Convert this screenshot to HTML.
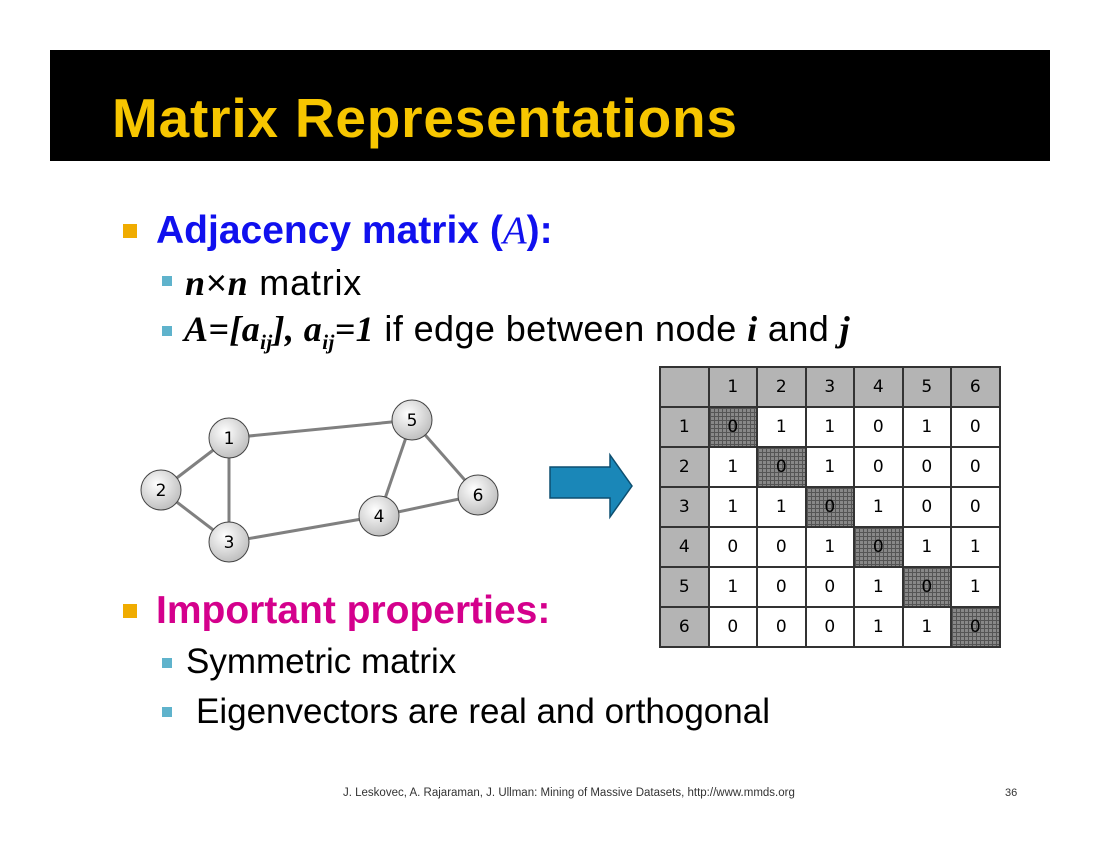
<!DOCTYPE html>
<html><head><style>
body{margin:0;width:1100px;height:850px;background:#fff;position:relative;font-family:"Liberation Sans",sans-serif;overflow:hidden}
.band{position:absolute;left:50px;top:50px;width:1000px;height:111px;background:#000}
.title{position:absolute;left:112px;top:86px;font-size:55px;font-weight:bold;color:#f7c600;letter-spacing:0.8px}
.t{position:absolute;white-space:nowrap}
.sq{position:absolute;background:#f0ac00;width:14px;height:14px}
.sq2{position:absolute;background:#5fb3cc;width:10px;height:10px}
.ser{font-family:"Liberation Serif",serif;font-style:italic;font-weight:bold}
table{position:absolute;left:659px;top:366px;border-collapse:collapse}
td{width:46.5px;height:38px;border:2px solid #333;text-align:center;font-size:17px;font-family:"DejaVu Sans",sans-serif;padding:0}
td.h{background:#b4b4b4}
td.d{background-color:#888;background-image:linear-gradient(#555 1px,transparent 1px),linear-gradient(90deg,#555 1px,transparent 1px);background-size:4px 4px}
</style></head><body>
<div class="band"></div>
<div class="title">Matrix Representations</div>
<div class="sq" style="left:123px;top:224px"></div>
<div class="t" style="left:156px;top:208px;font-size:39px;font-weight:bold;color:#1010ee">Adjacency matrix (<span class="ser" style="font-weight:normal">A</span>):</div>
<div class="sq2" style="left:162px;top:276px"></div>
<div class="t" style="left:185px;top:262px;font-size:36px;letter-spacing:0.8px"><span class="ser">n</span>×<span class="ser">n</span> matrix</div>
<div class="sq2" style="left:162px;top:326px"></div>
<div class="t" style="left:184px;top:308px;font-size:36px;letter-spacing:0.4px"><span class="ser">A=[a<sub style="font-size:21px">ij</sub>], a<sub style="font-size:21px">ij</sub>=1</span> if edge between node <span class="ser">i</span> and <span class="ser">j</span></div>
<div class="sq" style="left:123px;top:604px"></div>
<div class="t" style="left:156px;top:589px;font-size:39px;font-weight:bold;color:#d4008c">Important properties:</div>
<div class="sq2" style="left:162px;top:658px"></div>
<div class="t" style="left:186px;top:642px;font-size:35px">Symmetric matrix</div>
<div class="sq2" style="left:162px;top:707px"></div>
<div class="t" style="left:196px;top:692px;font-size:35px">Eigenvectors are real and orthogonal</div>
<div class="t" style="left:343px;top:787px;font-size:11.5px;color:#333">J. Leskovec, A. Rajaraman, J. Ullman: Mining of Massive Datasets, http://www.mmds.org</div>
<div class="t" style="left:1005px;top:787px;font-size:11px;color:#333">36</div>
<svg style="position:absolute;left:0;top:0" width="1100" height="850">
<defs><radialGradient id="g" cx="40%" cy="35%" r="70%"><stop offset="0" stop-color="#fff"/><stop offset="1" stop-color="#bbb"/></radialGradient></defs>
<g stroke="#808080" stroke-width="3">
<line x1="229" y1="438" x2="412" y2="420"/><line x1="229" y1="438" x2="161" y2="490"/><line x1="229" y1="438" x2="229" y2="542"/>
<line x1="161" y1="490" x2="229" y2="542"/><line x1="229" y1="542" x2="379" y2="516"/><line x1="379" y1="516" x2="412" y2="420"/>
<line x1="379" y1="516" x2="478" y2="495"/><line x1="412" y1="420" x2="478" y2="495"/></g>
<g stroke="#444" stroke-width="1" fill="url(#g)">
<circle cx="229" cy="438" r="20"/><circle cx="161" cy="490" r="20"/><circle cx="229" cy="542" r="20"/><circle cx="379" cy="516" r="20"/><circle cx="412" cy="420" r="20"/><circle cx="478" cy="495" r="20"/></g>
<g font-family="DejaVu Sans" font-size="17" text-anchor="middle" fill="#000">
<text x="229" y="444">1</text><text x="161" y="496">2</text><text x="229" y="548">3</text><text x="379" y="522">4</text><text x="412" y="426">5</text><text x="478" y="501">6</text></g>
<polygon points="550,467 610,467 610,455 632,486 610,517 610,498 550,498" fill="#1a87b8" stroke="#0d4f70" stroke-width="1.5"/>
</svg>
<table>
<tr><td class="h"></td><td class="h">1</td><td class="h">2</td><td class="h">3</td><td class="h">4</td><td class="h">5</td><td class="h">6</td></tr>
<tr><td class="h">1</td><td class="d">0</td><td>1</td><td>1</td><td>0</td><td>1</td><td>0</td></tr>
<tr><td class="h">2</td><td>1</td><td class="d">0</td><td>1</td><td>0</td><td>0</td><td>0</td></tr>
<tr><td class="h">3</td><td>1</td><td>1</td><td class="d">0</td><td>1</td><td>0</td><td>0</td></tr>
<tr><td class="h">4</td><td>0</td><td>0</td><td>1</td><td class="d">0</td><td>1</td><td>1</td></tr>
<tr><td class="h">5</td><td>1</td><td>0</td><td>0</td><td>1</td><td class="d">0</td><td>1</td></tr>
<tr><td class="h">6</td><td>0</td><td>0</td><td>0</td><td>1</td><td>1</td><td class="d">0</td></tr>
</table>
</body></html>
